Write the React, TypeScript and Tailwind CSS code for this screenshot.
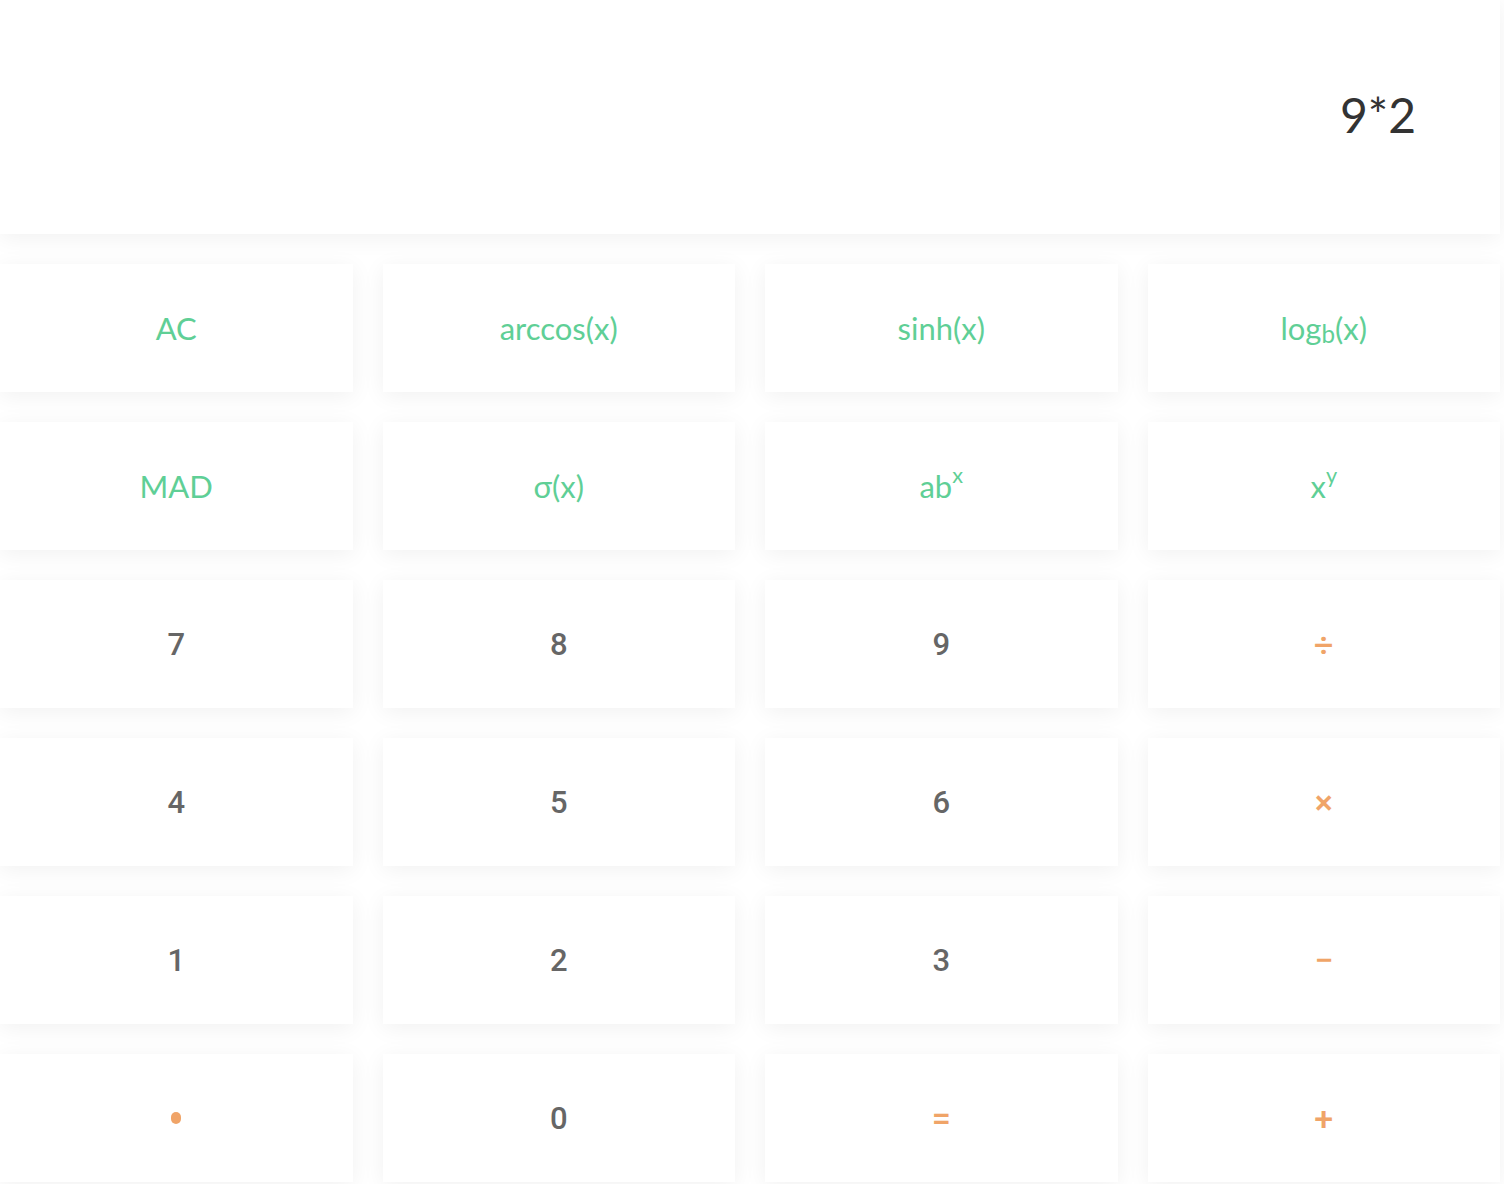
import React from "react";

type Key = { label: React.ReactNode; kind: "fn" | "num" | "op" };

const keys: Key[] = [
  { label: "AC", kind: "fn" },
  { label: "arccos(x)", kind: "fn" },
  { label: "sinh(x)", kind: "fn" },
  {
    label: (
      <>
        log<sub className="text-[0.78em] align-[-0.28em]">b</sub>(x)
      </>
    ),
    kind: "fn",
  },
  { label: "MAD", kind: "fn" },
  { label: "σ(x)", kind: "fn" },
  {
    label: (
      <>
        ab<sup className="text-[0.7em] align-[0.55em]">x</sup>
      </>
    ),
    kind: "fn",
  },
  {
    label: (
      <>
        x<sup className="text-[0.7em] align-[0.55em]">y</sup>
      </>
    ),
    kind: "fn",
  },
  { label: "7", kind: "num" },
  { label: "8", kind: "num" },
  { label: "9", kind: "num" },
  { label: "÷", kind: "op" },
  { label: "4", kind: "num" },
  { label: "5", kind: "num" },
  { label: "6", kind: "num" },
  { label: "×", kind: "op" },
  { label: "1", kind: "num" },
  { label: "2", kind: "num" },
  { label: "3", kind: "num" },
  { label: "−", kind: "op" },
  { label: <span className="block w-[10px] h-[12px] rounded-full bg-[#f0a468]" />, kind: "op" },
  { label: "0", kind: "num" },
  { label: "=", kind: "op" },
  { label: "+", kind: "op" },
];

const kindClass = {
  fn: "text-[#5fcf96] text-[31px] font-normal font-['Lato',sans-serif]",
  num: "text-[#666666] text-[31px] font-medium font-['Roboto',sans-serif]",
  op: "text-[#f0a468] text-[34px] font-medium font-['Roboto',sans-serif]",
};

export default function App() {
  return (
    <div className="min-h-screen bg-white">
      <div className="w-[1500px] flex flex-col gap-[30px] pb-[2px]">
        {/* display */}
        <div className="h-[234px] bg-white shadow-[0_4px_22px_rgba(0,0,0,0.06)] flex items-center justify-end pr-[84px] pb-[4px]">
          <span className="text-[48px] font-normal text-[#333333] font-['Lato',sans-serif] leading-none">
            9*2
          </span>
        </div>

        {/* keypad */}
        <div className="grid grid-cols-4 gap-[30px]">
          {keys.map((k, i) => (
            <button
              key={i}
              type="button"
              className={`h-[128px] bg-white shadow-[0_4px_22px_rgba(0,0,0,0.06)] flex items-center justify-center leading-none ${kindClass[k.kind]}`}
            >
              {k.label}
            </button>
          ))}
        </div>
      </div>
    </div>
  );
}
